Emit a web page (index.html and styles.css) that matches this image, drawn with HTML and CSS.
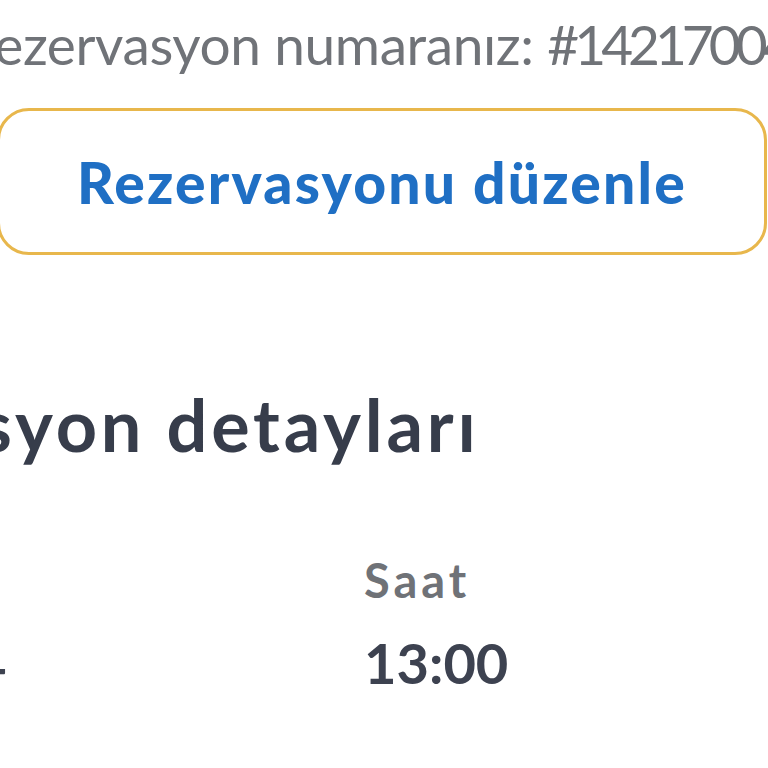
FILE: index.html
```html
<!DOCTYPE html>
<html lang="tr">
<head>
<meta charset="utf-8">
<title>Rezervasyon</title>
<link rel="stylesheet" href="styles.css">
</head>
<body>
<main class="page">
  <p class="number">Rezervasyon numaranız: <span class="number-id">#142170045</span></p>
  <a class="edit-btn" href="#">Rezervasyonu düzenle</a>
  <section class="details">
    <h2 class="details-title">Rezervasyon detayları</h2>
    <div class="details-grid">
      <div class="field">
        <span class="field-label">Tarih</span>
        <span class="field-value field-date">12.08.2024</span>
      </div>
      <div class="field">
        <span class="field-label">Saat</span>
        <span class="field-value">13:00</span>
      </div>
    </div>
  </section>
</main>
</body>
</html>
```
FILE: styles.css
```css
html, body {
  margin: 0;
  padding: 0;
  background: #ffffff;
  overflow: hidden;
  width: 768px;
  height: 768px;
}

.page {
  font-family: Lato, "Noto Sans", sans-serif;
  display: flex;
  flex-direction: column;
  white-space: nowrap;
}

.number {
  margin: 11px 0 0 -38px;
  font-size: 55px;
  line-height: 66px;
  font-weight: 400;
  color: #707378;
  letter-spacing: -0.4px;
}

.number-id {
  letter-spacing: -5px;
}

.edit-btn {
  margin: 31px 0 0 -3px;
  width: 770px;
  height: 147px;
  box-sizing: border-box;
  border: 3px solid #e8b74c;
  border-radius: 32px;
  display: flex;
  align-items: center;
  justify-content: center;
  text-decoration: none;
  color: #1f6fc4;
  font-size: 57px;
  font-weight: 900;
  letter-spacing: 2.2px;
}

.details {
  margin: 127px 0 0 -300px;
}

.details-title {
  margin: 0;
  font-size: 72px;
  line-height: 84px;
  font-weight: 700;
  color: #373d4b;
  letter-spacing: 3.8px;
}

.details-grid {
  display: grid;
  grid-template-columns: 664px 1fr;
  margin-top: 86px;
}

.field {
  display: flex;
  flex-direction: column;
  gap: 22px;
}

.field-label {
  font-size: 47px;
  line-height: 56px;
  font-weight: 700;
  color: #6f7277;
  letter-spacing: 4px;
}

.field-value {
  font-size: 56px;
  line-height: 66px;
  font-weight: 700;
  color: #3d4250;
}

.field-date {
  margin-left: 20px;
}
```
